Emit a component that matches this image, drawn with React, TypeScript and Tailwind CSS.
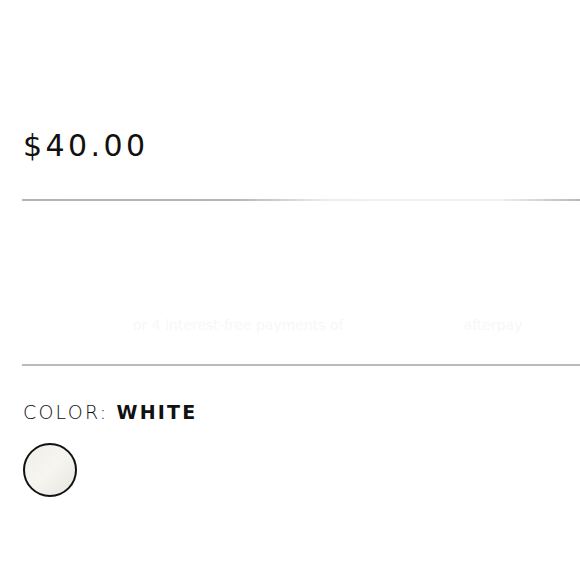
export default function App() {
  return (
    <div className="w-[580px] h-[580px] bg-white overflow-hidden" style={{ fontFamily: '"DejaVu Sans", "Open Sans", sans-serif' }}>
      <div className="pl-[23px] pt-[128px]">
        <div className="text-[30px] leading-[36px] tracking-[3.4px] text-[#111] font-normal">$40.00</div>
      </div>
      <div className="ml-[22px] mt-[35px] h-[2px]" style={{ backgroundImage: 'linear-gradient(to right, #b3b3b3 0%, #b5b5b5 38%, #eeeeee 55%, #f2f2f2 85%, #b8b8b8 100%)' }} />
      <div className="h-[163px] flex items-end pb-[28px] pl-[133px] gap-[120px] text-[14px] text-[#f7f7f7]">
        <span>or 4 interest-free payments of</span>
        <span>afterpay</span>
      </div>
      <div className="ml-[22px] h-[2px] bg-[#bababa]" />
      <div className="pl-[23px] pt-[35px] text-[19px] leading-[22px] tracking-[2.2px] text-[#111]">
        <span className="font-light">COLOR:</span> <span className="font-bold">WHITE</span>
      </div>
      <div className="pl-[23px] pt-[20px]">
        <div className="w-[54px] h-[54px] rounded-full border-2 border-[#111] bg-gradient-to-br from-[#f0efea] via-[#f6f5f0] to-[#e6e5e0]" />
      </div>
    </div>
  );
}
